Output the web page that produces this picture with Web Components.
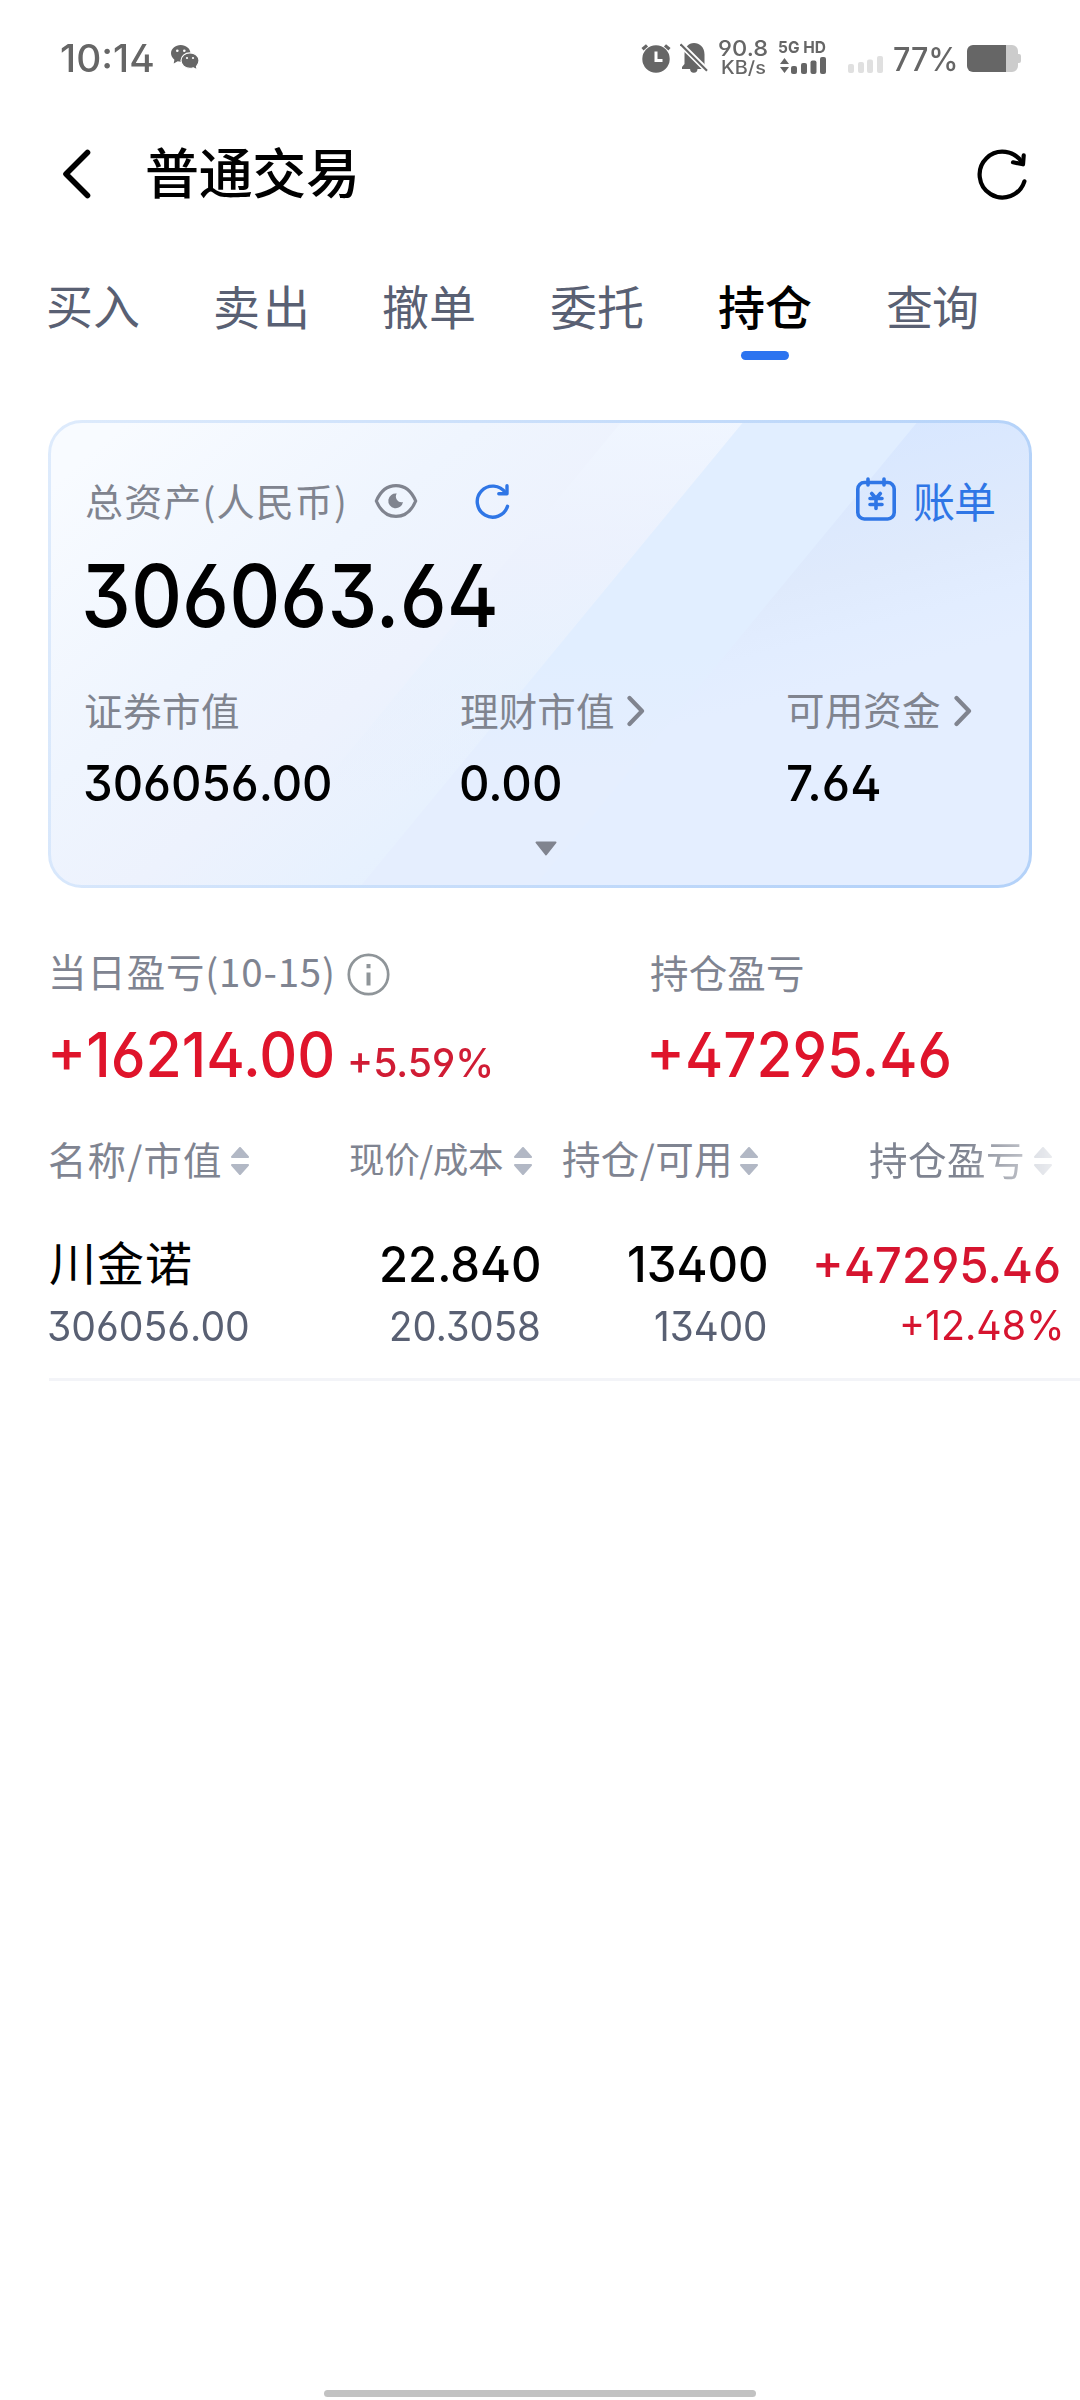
<!DOCTYPE html>
<html lang="zh-CN">
<head>
<meta charset="utf-8">
<title>普通交易</title>
<style>
html,body{margin:0;padding:0;background:#fff}
body{width:1080px;height:2400px;overflow:hidden;font-family:"Noto Sans CJK SC",sans-serif;color:#000}
</style>
</head>
<body>
<trade-app></trade-app>
<script>
const define = (tag, html) => customElements.define(tag, class extends HTMLElement {
  connectedCallback() {
    if (this.shadowRoot) return;
    const t = document.createElement('template');
    t.innerHTML = html;
    this.attachShadow({ mode: 'open' }).append(t.content.cloneNode(true));
  }
});

/* One line of text whose box hugs the ink and spans "w" pixels:
   Chinese labels are tracked out to it, figures are condensed to it. */
const pen = document.createElement('canvas').getContext('2d');
customElements.define('fit-text', class extends HTMLElement {
  connectedCallback() {
    if (this.shadowRoot) return;
    const root = this.attachShadow({ mode: 'open' });
    root.innerHTML = `<style>
      :host{display:block;flex:none;white-space:nowrap}
      :host([num]){font-family:Inter,sans-serif;font-feature-settings:"ss01"}
      span{display:block;width:max-content;transform-origin:0 0}
    </style><span><slot></slot></span>`;
    const size = +this.getAttribute('size');
    const text = this.textContent;
    if (this.hasAttribute('weight')) this.style.fontWeight = this.getAttribute('weight');
    const cs = getComputedStyle(this);
    pen.font = `${cs.fontWeight} ${size}px ${cs.fontFamily}`;
    const m = pen.measureText(text);
    const ink = m.actualBoundingBoxLeft + m.actualBoundingBoxRight;
    const w = +this.getAttribute('w') || ink;
    const A = Math.round(m.fontBoundingBoxAscent), D = Math.round(m.fontBoundingBoxDescent);
    const up = m.actualBoundingBoxAscent, down = m.actualBoundingBoxDescent;
    this.style.width = w + 'px';
    this.style.height = (up + down) + 'px';
    const s = root.querySelector('span').style;
    s.fontSize = size + 'px';
    s.lineHeight = (2 * up - A + D) + 'px';
    if (this.hasAttribute('num')) {
      s.transform = `scaleX(${w / ink})`;
      s.marginLeft = m.actualBoundingBoxLeft * w / ink + 'px';
    } else {
      s.letterSpacing = (w - ink) / Math.max(1, text.length - 1) + 'px';
      s.marginLeft = m.actualBoundingBoxLeft + 'px';
    }
  }
});

define('sort-icon', `<style>:host{display:block;flex:none;height:28px;color:#b2b8c5}svg{display:block}</style>
<svg width="18" height="28" viewBox="0 0 18 28" fill="currentColor" stroke="currentColor" stroke-width="2" stroke-linejoin="round"><path d="M9 1 17 10H1Z"/><path d="M9 27 17 18H1Z"/></svg>`);

define('chevron-icon', `<style>:host{display:block;flex:none}svg{display:block}</style>
<svg width="18" height="32" viewBox="0 0 18 32" fill="none" stroke="#80848f" stroke-width="4.200" stroke-linecap="round" stroke-linejoin="round"><path d="M2.500 3 15 16 2.500 29"/></svg>`);

define('status-bar', `<style>
:host{display:flex;height:115px;align-items:center;color:#666;box-sizing:border-box;padding-left:61px}
svg{display:block;flex:none}
.stack{display:flex;flex-direction:column;flex:none}
</style>
<fit-text num size="37.500" w="92" weight="500">10:14</fit-text>
<svg style="margin-left:18px" width="28" height="25" viewBox="0 0 28 25"><path fill="#666" d="M9.700 0C4.300 0 0 3.700 0 8.300c0 2.600 1.400 4.800 3.400 6.400L2.700 18.500l4-2.200c1 .3 2 .4 3 .4C15 16.700 19.400 13 19.400 8.300S15 0 9.700 0Z"/><path fill="#666" stroke="#fff" stroke-width="1.200" d="M18.900 7.800c-5 0-8.900 3.500-8.900 7.800s4 7.800 8.900 7.800c1.200 0 2.300-.2 3.400-.6l3.900 2-.7-3.400c1.500-1.400 2.500-3.500 2.500-5.800 0-4.300-4.100-7.800-9.100-7.800Z"/><g fill="#fff"><circle cx="6.300" cy="5.800" r="1.300"/><circle cx="13.300" cy="5.800" r="1.300"/><circle cx="16" cy="13" r="1.100"/><circle cx="22" cy="13" r="1.100"/></g></svg>
<svg style="margin-left:442px" width="30" height="30" viewBox="0 0 30 30"><circle cx="15" cy="16" r="13.700" fill="#666"/><path d="M1.500 6.300 6 2.400M28.500 6.300 24 2.400" stroke="#666" stroke-width="3.200" fill="none"/><path d="M15 8.500v9h6.500" stroke="#fff" stroke-width="3" fill="none"/></svg>
<svg style="margin-left:9px" width="28" height="31" viewBox="0 0 28 31"><path fill="#666" d="M2 27v-2l2.500-3V12.500C4.500 5 8.500 1 14 1s10.500 4 10.500 11.500V22l1.500 3v2h-8.500a3.700 3.700 0 0 1-7.400 0Z"/><path d="M-1 .5 29 30.500" stroke="#fff" stroke-width="5.500"/><path d="M.5 2.200 27 28.700" stroke="#666" stroke-width="2.200"/></svg>
<div class="stack" style="margin-left:11px;gap:4px;align-items:center">
  <fit-text num size="22" w="49" weight="500">90.8</fit-text>
  <fit-text num size="18" w="43" weight="500">KB/s</fit-text>
</div>
<div class="stack" style="margin-left:11px;gap:4px">
  <fit-text num size="16.500" w="47" weight="700">5G HD</fit-text>
  <svg width="48" height="17" viewBox="0 0 48 17" fill="#666"><path d="M5.500 1 10 7H1ZM5.500 16 10 10H1Z"/><rect x="12" y="9" width="6" height="8" rx="2"/><rect x="22" y="6" width="6" height="11" rx="2"/><rect x="31.500" y="3.500" width="6" height="13.500" rx="2"/><rect x="41" y="0" width="6" height="17" rx="2"/></svg>
</div>
<svg style="margin:14px 0 0 21px" width="36" height="17" viewBox="0 0 36 17" fill="#e0e0e0"><rect x="0" y="8" width="6" height="9" rx="2"/><rect x="10" y="6" width="6" height="11" rx="2"/><rect x="19" y="3.500" width="6" height="13.500" rx="2"/><rect x="29" y="0" width="6" height="17" rx="2"/></svg>
<fit-text style="margin:4px 0 0 10px" num size="32" w="62" weight="500">77%</fit-text>
<svg style="margin:2px 0 0 11px" width="54" height="27" viewBox="0 0 54 27"><path fill="#ccc" d="M39 0h6a6 6 0 0 1 6 6v3h1a2 2 0 0 1 2 2v5a2 2 0 0 1-2 2h-1v3a6 6 0 0 1-6 6h-6Z"/><path fill="#666" d="M6 0h33v27H6a6 6 0 0 1-6-6V6a6 6 0 0 1 6-6Z"/></svg>`);

define('title-bar', `<style>
:host{display:flex;height:118px;align-items:center;padding:0 52px 0 61px}
svg{display:block;flex:none}
.grow{flex:1}
</style>
<svg width="30" height="52" viewBox="0 0 30 52" fill="none" stroke="#000" stroke-width="5.600" stroke-linecap="round" stroke-linejoin="round"><path d="M26.500 4.500 5 26 26.500 47.500"/></svg>
<fit-text style="margin:-4px 0 0 56px" size="54" w="208" weight="500">普通交易</fit-text>
<div class="grow"></div>
<svg width="52" height="52" viewBox="0 0 52 52" fill="none" stroke="#000" stroke-width="4.200" stroke-linecap="round" stroke-linejoin="round"><path d="M48.400 33.300A22.900 22.900 0 1 1 46.300 15"/><path d="M47.700 7.300 47 16.300 37 14.300"/></svg>`);

define('nav-tab', `<style>
:host{display:flex;flex-direction:column;width:168px;color:#596073}
:host([active]){color:#000;font-weight:500}
.word{height:43px;display:flex;align-items:center}
.bar{display:none;width:48px;height:9px;border-radius:5px;background:#2c74f0;margin:22px 0 0 21px}
:host([active]) .bar{display:block}
</style><div class="word"><slot></slot></div><div class="bar"></div>`);

define('nav-tabs', `<style>:host{display:flex;padding:53px 0 0 48px;box-sizing:border-box;height:187px}</style>
<nav-tab><fit-text size="47" w="91">买入</fit-text></nav-tab>
<nav-tab><fit-text size="47" w="90">卖出</fit-text></nav-tab>
<nav-tab><fit-text style="margin-left:-1px" size="47" w="91">撤单</fit-text></nav-tab>
<nav-tab><fit-text style="margin-left:-1px" size="47" w="92">委托</fit-text></nav-tab>
<nav-tab active><fit-text style="margin-left:-1px" size="47" w="92" weight="500">持仓</fit-text></nav-tab>
<nav-tab><fit-text style="margin-left:-1px" size="47" w="90">查询</fit-text></nav-tab>`);

define('asset-card', `<style>
:host{display:grid;width:984px;height:468px;margin-left:48px}
.bg,.body{grid-area:1/1}
.bg{display:block}
.body{display:flex;flex-direction:column;padding:51px 38px 0 37px;color:#80848f}
.row{display:flex;align-items:center}
.top{height:60px}
.cols{display:grid;grid-template-columns:376px 327px 1fr;align-items:center}
.cell{display:flex;align-items:center}
.cell fit-text{margin-top:-2px}
svg{display:block;flex:none}
.black{color:#000}
</style>
<svg class="bg" width="984" height="468" viewBox="0 0 984 468">
<defs>
<linearGradient id="base" gradientUnits="userSpaceOnUse" x1="80" y1="0" x2="500" y2="500"><stop offset="0" stop-color="#f8fbff"/><stop offset=".35" stop-color="#eff5fe"/><stop offset=".55" stop-color="#edf2fd"/><stop offset=".75" stop-color="#e7f1fe"/><stop offset=".95" stop-color="#e4eefe"/></linearGradient>
<linearGradient id="edge" x1="0" x2="1" y1="0" y2=".15"><stop offset="0" stop-color="#deebfc"/><stop offset="1" stop-color="#b4d2f9"/></linearGradient>
<linearGradient id="b0" x1="0" x2="0" y1="0" y2="1"><stop offset="0" stop-color="#f0f6ff" stop-opacity=".9"/><stop offset=".3" stop-color="#ecf1fd" stop-opacity=".75"/><stop offset=".55" stop-color="#e7f1fe" stop-opacity=".5"/><stop offset=".8" stop-color="#e5eefe" stop-opacity="0"/></linearGradient>
<linearGradient id="b1" x1="0" x2="0" y1="0" y2="1"><stop offset="0" stop-color="#e1eeff"/><stop offset=".5" stop-color="#e1eeff"/><stop offset=".75" stop-color="#e5eefe"/></linearGradient>
<linearGradient id="b2" gradientUnits="userSpaceOnUse" x1="860" y1="0" x2="920" y2="230"><stop offset="0" stop-color="#d8e7ff"/><stop offset=".55" stop-color="#dfeafc"/><stop offset=".8" stop-color="#e2edff"/><stop offset="1" stop-color="#e4eeff"/></linearGradient>
<clipPath id="clip"><rect x="1" y="1" width="982" height="466" rx="33"/></clipPath>
</defs>
<g clip-path="url(#clip)"><rect width="984" height="468" fill="url(#base)"/>
<path d="M575 0H697L311 468H189Z" fill="url(#b0)"/>
<path d="M697 0H984V468H311Z" fill="url(#b1)"/>
<path d="M871 0H984V468H485Z" fill="url(#b2)"/></g>
<rect x="1.500" y="1.500" width="981" height="465" rx="32.500" fill="none" stroke="url(#edge)" stroke-width="3"/>
</svg>
<div class="body">
  <div class="row top">
    <fit-text style="margin:5px 0 0 1px" size="38" w="258">总资产(人民币)</fit-text>
    <svg style="margin-left:30px" width="44" height="36" viewBox="0 0 44 36" fill="none" stroke="#80848f" stroke-width="3.200"><path stroke-linejoin="round" d="M2.300 18C6.500 8 13 2.600 22 2.600S37.500 8 41.700 18C37.500 28 31 33.400 22 33.400S6.500 28 2.300 18Z"/><path stroke="none" fill="#80848f" d="M22.800 10.600a7.400 7.400 0 1 0 6.200 8.400 5.600 5.600 0 0 1-6.200-8.400Z"/></svg>
    <svg style="margin-left:56px" width="36" height="36" viewBox="0 0 36 36" fill="none" stroke="#2f76e6" stroke-width="3.400" stroke-linecap="round" stroke-linejoin="round"><path d="M33.500 23.300A15.500 15.500 0 1 1 31.500 9.800"/><path d="M33 2.800V10.700H24.800"/></svg>
    <div style="flex:1"></div>
    <svg style="margin:-4px 18px 0 0" width="40" height="44" viewBox="0 0 40 44" fill="none" stroke="#2f76e6" stroke-width="3.600" stroke-linecap="round" stroke-linejoin="round"><rect x="1.800" y="5.500" width="36.400" height="36.500" rx="6.500"/><path d="M12 2v6M28 2v6" /><path d="m15.700 16.500 4.300 5 4.300-5M14 21.500h12M14 27.500h12M20 21.500v10"/></svg>
    <fit-text style="color:#2f76e6;margin-top:2px" size="42" w="80">账单</fit-text>
  </div>
  <div class="row black" style="height:65px;margin-top:32px"><fit-text num size="86.500" w="417" weight="500">306063.64</fit-text></div>
  <div class="cols" style="height:36px;margin-top:65px">
    <div class="cell"><fit-text size="38.500" w="153">证券市值</fit-text></div>
    <div class="cell"><fit-text size="38.500" w="152">理财市值</fit-text><chevron-icon style="margin:-2px 0 0 14px"></chevron-icon></div>
    <div class="cell"><fit-text size="38.500" w="152">可用资金</fit-text><chevron-icon style="margin:-2px 0 0 14px"></chevron-icon></div>
  </div>
  <div class="cols black" style="height:37px;margin-top:35px">
    <fit-text num size="49" w="247" weight="500">306056.00</fit-text>
    <fit-text num size="49" w="99" weight="500">0.00</fit-text>
    <fit-text num size="49" w="92" weight="500">7.64</fit-text>
  </div>
  <svg style="margin:40px 0 0 450px" width="22" height="15" viewBox="0 0 22 15" fill="#80848f" stroke="#80848f" stroke-width="2" stroke-linejoin="round"><path d="M1.500 1.500h19L11 13.500Z"/></svg>
</div>`);

define('profit-summary', `<style>
:host{display:flex;height:121px;margin:68px 0 0 52px;color:#7f8491}
.a{width:600px}
.label{display:flex;height:36px;align-items:center}
.label>fit-text{margin-top:1px}
.value{display:flex;height:45px;align-items:flex-end;margin-top:41px;color:#df142b}
svg{display:block;margin-left:15px}
</style>
<div class="a"><div class="label"><fit-text size="38.500" w="280">当日盈亏(10-15)</fit-text>
<svg width="43" height="43" viewBox="0 0 43 43" fill="none" stroke="#8f9599"><circle cx="21.500" cy="21.500" r="19.700" stroke-width="2.700"/><path stroke-width="4" d="M21.500 11v4.200M21.500 19.500v13"/></svg></div>
<div class="value"><fit-text num size="61.500" w="283" weight="500">+16214.00</fit-text><fit-text style="margin-left:15px;color:#d01c34" num size="40" w="142" weight="500">+5.59%</fit-text></div></div>
<div style="margin-left:-1px"><div class="label"><fit-text style="margin-top:-1px" size="38.500" w="152">持仓盈亏</fit-text></div>
<div class="value"><fit-text num size="61.500" w="303" weight="500">+47295.46</fit-text></div></div>`);

define('holding-head', `<style>
:host{display:flex;height:36px;align-items:center;margin:66px 0 0 49px;color:#7f8491}
.fade{display:flex;align-items:center;width:210px;-webkit-mask-image:linear-gradient(90deg,#000 45%,rgba(0,0,0,.3) 85%,rgba(0,0,0,.1));mask-image:linear-gradient(90deg,#000 45%,rgba(0,0,0,.3) 85%,rgba(0,0,0,.1))}
sort-icon{margin-left:11px}
</style>
<fit-text size="38.500" w="171">名称/市值</fit-text><sort-icon></sort-icon>
<fit-text style="margin-left:101px" size="35.500" w="153">现价/成本</fit-text><sort-icon></sort-icon>
<fit-text style="margin-left:31px" size="38.500" w="166">持仓/可用</fit-text><sort-icon></sort-icon>
<div class="fade" style="margin-left:112px"><fit-text size="38.500" w="153">持仓盈亏</fit-text><sort-icon></sort-icon></div>`);

define('holding-row', `<style>
:host{display:block;margin:63px 0 0 49px;height:139px;border-bottom:3px solid #f3f4f8;box-sizing:border-box}
.line{display:grid;grid-template-columns:200px 290px 227px 295px;align-items:center}
.one{height:43px}
.two{height:30px;margin-top:25px;color:#596073}
.line>*:not(:first-child){justify-self:end}
.red{color:#d6142f}
</style>
<div class="line one"><fit-text style="margin:-2px 0 0 1px" size="47" w="141">川金诺</fit-text><fit-text num size="49" w="157" weight="500">22.840</fit-text><fit-text num size="49" w="137" weight="500">13400</fit-text><fit-text class="red" style="margin-right:-2px" num size="49" w="247" weight="500">+47295.46</fit-text></div>
<div class="line two"><fit-text num size="40.500" w="201">306056.00</fit-text><fit-text num size="40.500" w="147">20.3058</fit-text><fit-text num size="40.500" w="111">13400</fit-text><fit-text class="red" num size="40.500" w="159">+12.48%</fit-text></div>`);

define('home-bar', `<style>:host{display:block;width:432px;height:7px;border-radius:4px;background:#c2c2c2;margin:auto auto 3px}</style>`);

define('trade-app', `<style>:host{display:flex;flex-direction:column;width:1080px;height:2400px;background:#fff}</style>
<status-bar></status-bar><title-bar></title-bar><nav-tabs></nav-tabs><asset-card></asset-card>
<profit-summary></profit-summary><holding-head></holding-head><holding-row></holding-row>
<home-bar></home-bar>`);
</script>
</body>
</html>
